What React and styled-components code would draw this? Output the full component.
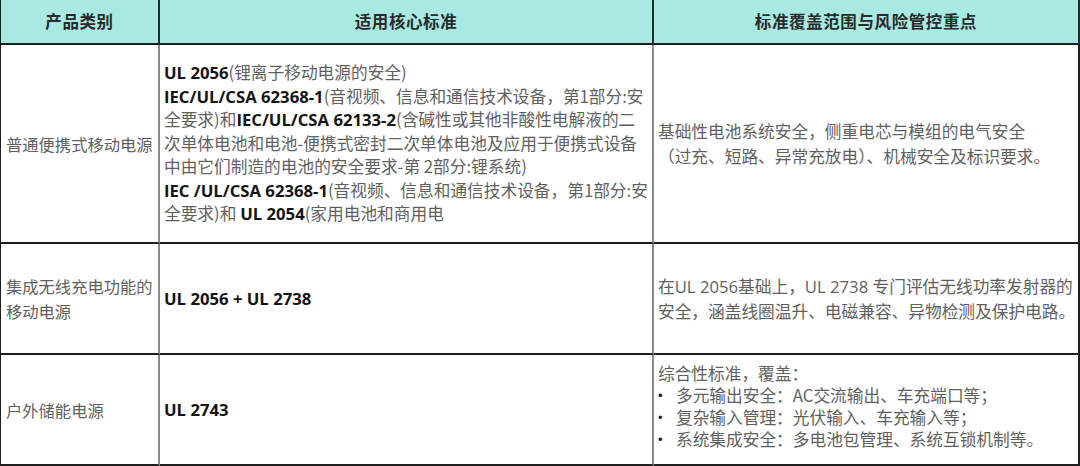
import React from "react";
import styled, { createGlobalStyle } from "styled-components";

const Global = createGlobalStyle`
  html, body { margin: 0; padding: 0; background: #ffffff; }
  body { overflow: hidden; }
  #root { width: 1080px; height: 466px; overflow: hidden; }
`;

const Table = styled.div`
  box-sizing: border-box;
  width: 1080px;
  display: grid;
  grid-template-columns: 159px 494px 1fr;
  grid-template-rows: 45px 199px 111px 111px;
  border-left: 1px solid #1c1c1c;
  font-family: "Open Sans", "Noto Sans CJK SC", sans-serif;
`;

const HeadCell = styled.div`
  box-sizing: border-box;
  background: #a8e9e1;
  border-bottom: 2px solid #1e1e1e;
  border-right: 2px solid #2a2a2a;
  display: flex;
  align-items: center;
  justify-content: center;
  padding-bottom: 1px;
  font-family: "Noto Sans CJK SC", sans-serif;
  font-weight: 700;
  font-size: 16.5px;
  color: #2a2a2a;
  letter-spacing: 0.6px;
  white-space: nowrap;
`;

const Cell = styled.div`
  box-sizing: border-box;
  border-bottom: 2px solid #1e1e1e;
  border-right: 2px solid ${(p) => (p.$last ? "#1e1e1e" : "#8a8a8a")};
  display: flex;
  align-items: center;
  padding: ${(p) => p.$pad || "0 4px"};
  overflow: hidden;
  white-space: nowrap;
  font-size: ${(p) => p.$fs || "16.7px"};
  line-height: ${(p) => p.$lh || "24px"};
  color: #5a5a5a;
`;

const Block = styled.div`
  white-space: nowrap;
`;

const Line = styled.div`
  white-space: nowrap;
`;

const Std = styled.b`
  font-family: "Open Sans", sans-serif;
  font-weight: 700;
  color: #141414;
`;

const Zh = styled.span`
  font-family: "Noto Sans CJK SC", sans-serif;
  font-weight: 400;
  color: #5f5f5f;
`;

const Plain = styled.span`
  font-family: "Open Sans", "Noto Sans CJK SC", sans-serif;
  color: #5f5f5f;
`;

const BulletLine = styled.div`
  display: flex;
  white-space: nowrap;
`;

const Dot = styled.span`
  width: 18px;
  flex: none;
  color: #1a1a1a;
  font-family: "Liberation Sans", sans-serif;
  font-size: 13px;
`;

export default function App() {
  return (
    <>
      <Global />
      <Table>
        <HeadCell>产品类别</HeadCell>
        <HeadCell>适用核心标准</HeadCell>
        <HeadCell>标准覆盖范围与风险管控重点</HeadCell>

        <Cell $fs="16.3px" $pad="0 3px 0 5px">
          <Zh>普通便携式移动电源</Zh>
        </Cell>
        <Cell $lh="23.5px">
          <Block>
            <Line>
              <Std>UL 2056</Std>
              <Zh>(锂离子移动电源的安全)</Zh>
            </Line>
            <Line>
              <Std>IEC/UL/CSA 62368-1</Std>
              <Zh>(音视频、信息和通信技术设备，第1部分:安</Zh>
            </Line>
            <Line>
              <Zh>全要求)和</Zh>
              <Std>IEC/UL/CSA 62133-2</Std>
              <Zh>(含碱性或其他非酸性电解液的二</Zh>
            </Line>
            <Line>
              <Zh>次单体电池和电池-便携式密封二次单体电池及应用于便携式设备</Zh>
            </Line>
            <Line>
              <Zh>中由它们制造的电池的安全要求-第 2部分:锂系统)</Zh>
            </Line>
            <Line>
              <Std>IEC /UL/CSA 62368-1</Std>
              <Zh>(音视频、信息和通信技术设备，第1部分:安</Zh>
            </Line>
            <Line>
              <Zh>全要求)和 </Zh>
              <Std>UL 2054</Std>
              <Zh>(家用电池和商用电</Zh>
            </Line>
          </Block>
        </Cell>
        <Cell $last $lh="25px">
          <Block>
            <Line>
              <Zh>基础性电池系统安全，侧重电芯与模组的电气安全</Zh>
            </Line>
            <Line>
              <Zh>（过充、短路、异常充放电）、机械安全及标识要求。</Zh>
            </Line>
          </Block>
        </Cell>

        <Cell $fs="16.3px" $pad="0 3px 0 5px">
          <Block>
            <Line>
              <Zh>集成无线充电功能的</Zh>
            </Line>
            <Line>
              <Zh>移动电源</Zh>
            </Line>
          </Block>
        </Cell>
        <Cell>
          <Std>UL 2056 + UL 2738</Std>
        </Cell>
        <Cell $last>
          <Block>
            <Line>
              <Zh>在</Zh>
              <Plain>UL 2056</Plain>
              <Zh>基础上，</Zh>
              <Plain>UL 2738 </Plain>
              <Zh>专门评估无线功率发射器的</Zh>
            </Line>
            <Line>
              <Zh>安全，涵盖线圈温升、电磁兼容、异物检测及保护电路。</Zh>
            </Line>
          </Block>
        </Cell>

        <Cell $fs="16.3px" $pad="0 3px 0 5px">
          <Zh>户外储能电源</Zh>
        </Cell>
        <Cell>
          <Std>UL 2743</Std>
        </Cell>
        <Cell $last $lh="21.8px" $pad="0 4px 5px">
          <Block>
            <Line>
              <Zh>综合性标准，覆盖：</Zh>
            </Line>
            <BulletLine>
              <Dot>•</Dot>
              <Zh>多元输出安全：AC交流输出、车充端口等；</Zh>
            </BulletLine>
            <BulletLine>
              <Dot>•</Dot>
              <Zh>复杂输入管理：光伏输入、车充输入等；</Zh>
            </BulletLine>
            <BulletLine>
              <Dot>•</Dot>
              <Zh>系统集成安全：多电池包管理、系统互锁机制等。</Zh>
            </BulletLine>
          </Block>
        </Cell>
      </Table>
    </>
  );
}
